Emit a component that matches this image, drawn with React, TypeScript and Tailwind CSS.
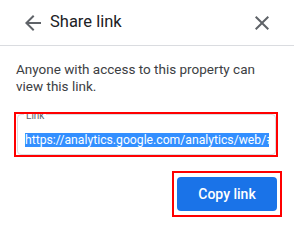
export default function App() {
  return (
    <div className="w-[294px] h-[225px] bg-white font-['Roboto',sans-serif] overflow-hidden">
      <div className="flex items-center h-[46px] border-b border-[#dadce0] pl-[21px] pr-[20px]">
        <svg viewBox="0 0 24 24" className="w-6 h-6 fill-[#5f6368]">
          <path d="M20 11H7.83l5.59-5.59L12 4l-8 8 8 8 1.41-1.41L7.83 13H20v-2z" />
        </svg>
        <div className="ml-[5px] text-[16.5px] text-[#202124]">Share link</div>
        <div className="flex-1" />
        <svg viewBox="0 0 24 24" className="w-6 h-6 fill-[#5f6368]">
          <path d="M19 6.41L17.59 5 12 10.59 6.41 5 5 6.41 10.59 12 5 17.59 6.41 19 12 13.41 17.59 19 19 17.59 13.41 12z" />
        </svg>
      </div>

      <p className="pl-4 pt-[15px] w-[275px] text-[13.5px] leading-[17px] text-[#3c4043]">
        Anyone with access to this property can view this link.
      </p>

      <div className="ml-[14px] mt-[17px] w-[264px] h-[45px] border-2 border-[#ff0000] overflow-hidden relative">
        <div className="ml-[1px] h-[41px] border border-[#dadce0] rounded-[4px] pl-[7px] pr-[6px] pt-[18px]">
          <div className="overflow-hidden whitespace-nowrap text-[12.2px] leading-[15px]">
            <span className="bg-[#338fff] text-white">
              https://analytics.google.com/analytics/web/#/
            </span>
          </div>
        </div>
        <span className="absolute left-[8px] top-[-4px] px-[2px] bg-white text-[10px] leading-[12px] text-[#5f6368]">
          Link
        </span>
      </div>

      <div className="flex justify-end pr-[12px] mt-[14px]">
        <div className="border-2 border-[#ff0000] px-[3px] py-[4px]">
          <button className="w-[100px] h-[34px] rounded-[4px] bg-[#1a73e8] text-white text-[14px] font-medium">
            Copy link
          </button>
        </div>
      </div>
    </div>
  );
}
